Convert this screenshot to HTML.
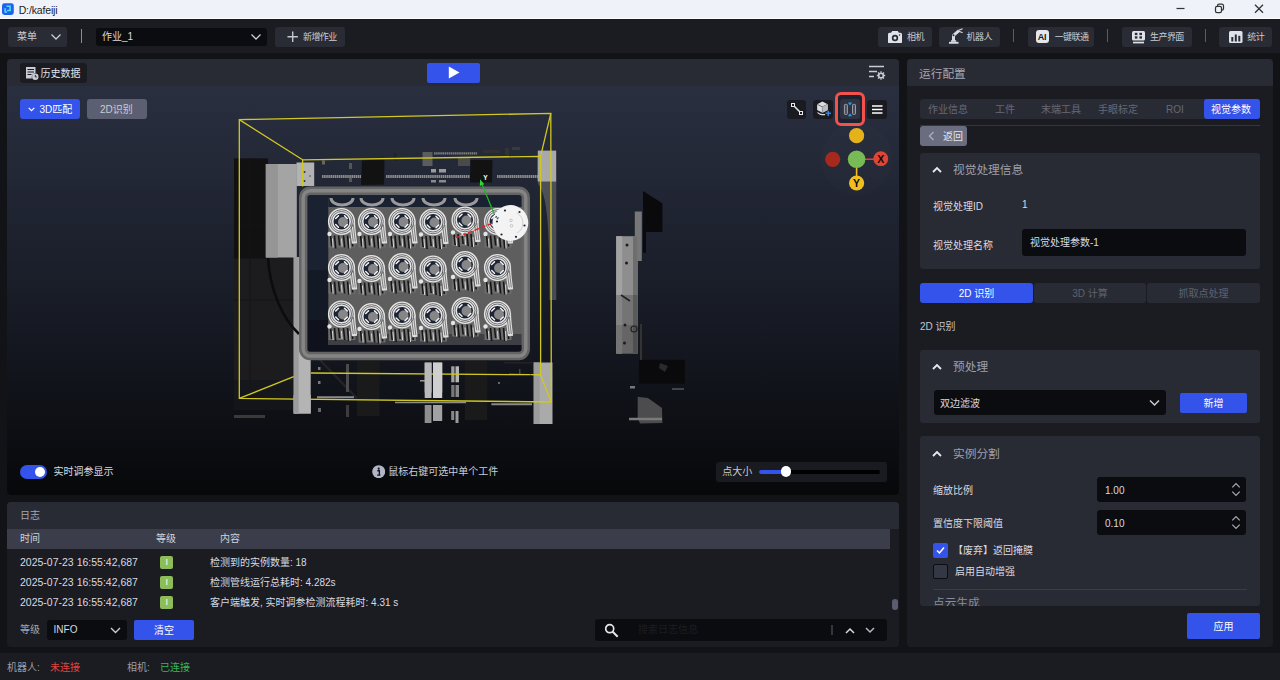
<!DOCTYPE html>
<html lang="zh-CN">
<head>
<meta charset="utf-8">
<title>D:/kafeiji</title>
<style>
*{box-sizing:border-box;margin:0;padding:0}
html,body{width:1280px;height:680px;overflow:hidden;background:#121317}
body{font-family:"Liberation Sans","Noto Sans CJK SC",sans-serif;font-size:11px;color:#d8dae0;position:relative}
.abs,.abs>*{position:absolute}
.t{white-space:nowrap;line-height:1}
#titlebar{left:0;top:0;width:1280px;height:19px;background:#eff3f9}
#toolbar{left:0;top:19px;width:1280px;height:34px;background:#1b1c21}
.btn{background:#2a2c35;border-radius:3px}
.inp{background:#0b0c0f;border-radius:3px}
.blue{background:#3353ea;border-radius:2px}
.sep{width:1px;background:#5a5d69}
#status{left:0;top:653px;width:1280px;height:27px;background:#1b1c21}
.panel{background:#1b1c21;border-radius:4px;overflow:hidden}
.phead{left:0;top:0;width:100%;height:27px;background:#292b34}
.card{background:#292b34;border-radius:3px}
.ctr{padding-bottom:2px;display:flex;align-items:center;justify-content:center;white-space:nowrap}
.c{}
.c2>span{display:inline-block;transform:scaleX(.9)}
.tab{font-size:10px;color:#666976}
.ch{font-size:11.7px;color:#9da0ab}
.lb{font-size:10px;color:#d8dae0}
.ts{font-size:10px;color:#d8dae0}
.bdg{width:13px;height:13px;background:#8dbd58;border-radius:2px;color:#fff;font-size:9px;padding-bottom:0}
.tb{font-size:9px;letter-spacing:-.6px;color:#c9ccd4}
</style>
</head>
<body>
<div class="abs" style="left:0;top:0;width:1280px;height:680px">

<!-- TITLE BAR -->
<div id="titlebar" class="abs">
  <svg style="left:2px;top:3.4px" width="11.8" height="12.2" viewBox="0 0 12 12"><rect width="12" height="12" rx="2.5" fill="#1d63f0"/><path d="M4.6 3.2h3.6v4.2H5.2M3.2 5.2v3.8h2" stroke="#54e0ec" stroke-width="1.5" fill="none"/></svg>
  <div class="t" style="left:18.7px;top:4.5px;font-size:10.5px;letter-spacing:-.15px;color:#1a1a1a">D:/kafeiji</div>
  <svg style="left:1174px;top:2.3px" width="100" height="13" viewBox="0 0 100 13" fill="none" stroke="#333" stroke-width="1.25"><path d="M2.5 6.5h8"/><rect x="41.5" y="4.3" width="6" height="6.3" rx="1.6"/><path d="M43.5 4.3V3.8a1.6 1.6 0 0 1 1.6-1.6h2.8a1.6 1.6 0 0 1 1.6 1.6v2.8a1.6 1.6 0 0 1-1.6 1.6"/><path d="M81 2.8l8 8M89 2.8l-8 8"/></svg>
  <div style="left:0;top:17.6px;width:1280px;height:1.2px;background:#fbfcfe"></div>
</div>

<!-- TOOLBAR -->
<div id="toolbar" class="abs">
  <div class="btn" style="left:8px;top:8px;width:59px;height:19.5px"></div>
  <div class="t" style="left:17px;top:12.5px;font-size:10px;color:#c9ccd4">菜单</div>
  <svg style="left:50px;top:14px" width="12" height="8" viewBox="0 0 12 8" fill="none" stroke="#c9ccd4" stroke-width="1.3"><path d="M1.5 1.5l4.5 4.5l4.5-4.5"/></svg>
  <div class="sep" style="left:80.5px;top:10px;height:13.5px;width:1.3px;background:#8a8d98"></div>
  <div class="inp" style="left:96px;top:9px;width:171px;height:18px"></div>
  <div class="t" style="left:102px;top:13px;font-size:10px;color:#d8dae0">作业_1</div>
  <svg style="left:250px;top:14px" width="12" height="8" viewBox="0 0 12 8" fill="none" stroke="#c9ccd4" stroke-width="1.3"><path d="M1.5 1.5l4.5 4.5l4.5-4.5"/></svg>
  <div class="btn" style="left:275.3px;top:8px;width:69.7px;height:19.6px"></div>
  <svg style="left:286.5px;top:12px" width="11.4" height="11.4" viewBox="0 0 12 12" stroke="#c3c6d0" stroke-width="1.5"><path d="M6 .5v11M.5 6h11"/></svg>
  <div class="t tb" style="left:303px;top:13.5px">新增作业</div>

  <div class="btn" style="left:878.4px;top:8px;width:53.5px;height:19.7px"></div>
  <svg style="left:888.4px;top:11.5px" width="14" height="12.5" viewBox="0 0 14 12.5"><path d="M4.2 0h5.6l1.1 1.8h1.6a1.5 1.5 0 0 1 1.5 1.5v7.7a1.5 1.5 0 0 1-1.5 1.5H1.5A1.5 1.5 0 0 1 0 11V3.3a1.5 1.5 0 0 1 1.5-1.5h1.6Z" fill="#e0e2ea"/><circle cx="7" cy="7" r="3.2" fill="#2a2c35"/><circle cx="7" cy="7" r="1.5" fill="#e0e2ea"/><circle cx="11.6" cy="4" r=".8" fill="#2a2c35"/></svg>
  <div class="t tb" style="left:907px;top:13.5px">相机</div>
  <div class="btn" style="left:938.8px;top:8px;width:61.2px;height:19.7px"></div>
  <svg style="left:947.5px;top:8.5px" width="16" height="16" viewBox="0 0 16 16" fill="none" stroke="#d8dae2"><path d="M5.5 13V7.300L11 2.700" stroke-width="3" stroke-linejoin="round"/><path d="M10.800 2.300l3.800-1.600M11 3.200l3.600 1.600" stroke-width="1.200"/><circle cx="5.5" cy="7.200" r="1" fill="#2a2c35" stroke="none"/><path d="M1 14.800h9.5" stroke-width="1.900"/><path d="M3 13h5.200" stroke-width="1.600"/></svg>
  <div class="t tb" style="left:966.6px;top:13.5px">机器人</div>
  <div class="sep" style="left:1012.8px;top:10.4px;height:13px;width:1.3px"></div>
  <div class="btn" style="left:1027.5px;top:8px;width:66.5px;height:19.7px"></div>
  <div style="left:1036px;top:11.3px;width:13px;height:13px;background:#e6e7ec;border-radius:3px"></div>
  <div class="t" style="left:1037.7px;top:13.5px;font-size:9px;font-weight:bold;color:#1b1c21;letter-spacing:-.3px">AI</div>
  <div class="t tb" style="left:1054.7px;top:13.5px">一键联通</div>
  <div class="sep" style="left:1107.2px;top:10.4px;height:13px;width:1.3px"></div>
  <div class="btn" style="left:1121.9px;top:8px;width:69.8px;height:19.7px"></div>
  <svg style="left:1132.3px;top:11.5px" width="13" height="13" viewBox="0 0 13 13"><rect x="0" y="0" width="13" height="9.5" rx="1.5" fill="#e0e2ea"/><rect x="2.8" y="1.8" width="2.6" height="2.3" fill="#2a2c35"/><rect x="7.4" y="1.8" width="2.6" height="2.3" fill="#2a2c35"/><rect x="2.8" y="5.3" width="2.6" height="2.3" fill="#2a2c35"/><rect x="7.4" y="5.3" width="2.6" height="2.3" fill="#2a2c35"/><rect x="1" y="10.7" width="11" height="1.7" fill="#e0e2ea"/></svg>
  <div class="t tb" style="left:1150.1px;top:13.5px">生产界面</div>
  <div class="sep" style="left:1204.9px;top:10.4px;height:13px;width:1.3px"></div>
  <div class="btn" style="left:1219.4px;top:8px;width:53px;height:19.7px"></div>
  <svg style="left:1229.1px;top:11.6px" width="13.5" height="12" viewBox="0 0 13.5 12"><rect width="13.5" height="12" rx="1.5" fill="#e0e2ea"/><rect x="2.3" y="6" width="2" height="4.5" fill="#2a2c35"/><rect x="5.8" y="3.5" width="2" height="7" fill="#2a2c35"/><rect x="9.3" y="4.8" width="2" height="5.7" fill="#2a2c35"/></svg>
  <div class="t tb" style="left:1247.3px;top:13.5px">统计</div>
</div>

<!-- VIEW PANEL -->
<div id="view" class="abs panel" style="left:7px;top:59px;width:892px;height:435.5px">
  <div class="phead"></div>
  <div id="vp" style="left:0;top:27px;width:892px;height:408.5px;background:linear-gradient(#2a2f40 0%,#191d28 50%,#07080a 100%)"></div>
  <svg id="scene" style="left:-7px;top:-59px" width="1280" height="680" viewBox="0 0 1280 680">
<g shape-rendering="auto">
<!-- left dark block -->
<path d="M234 158.5L268 158.5L268 257L294 257L294 400L234 400Z" fill="#1c1c1e"/><rect x="234" y="158.5" width="34" height="100" fill="#111112"/>
<path d="M234 300h60M234 225h34M250 158v242" stroke="#141415" stroke-width="1" fill="none"/>
<rect x="234" y="380" width="60" height="30" fill="#15161a" opacity=".8"/>
<!-- grey panel -->
<rect x="265.8" y="164" width="31" height="93.5" fill="#a4a4a4"/>
<rect x="265.8" y="164" width="12" height="93.5" fill="#959595"/>
<rect x="296.5" y="162.5" width="17.7" height="23.5" fill="#b2b2b2"/>
<circle cx="304.5" cy="172" r="1" fill="#333"/><circle cx="304.5" cy="181" r="1" fill="#333"/><circle cx="310" cy="176" r=".8" fill="#444"/>
<!-- left post -->
<rect x="293.7" y="257" width="17" height="156.5" fill="#b4b4b4"/>
<rect x="293.7" y="257" width="5" height="156.5" fill="#9c9c9c"/>
<!-- cable -->
<path d="M268 258C270 290 282 318 299 334" fill="none" stroke="#0c0c0e" stroke-width="2.6"/>
<path d="M320 360L373 415" fill="none" stroke="#242426" stroke-width="2.4"/>
<!-- top rods and bits -->
<path d="M322 176.5H361M386 176.5H470M497 176.5H538" stroke="#8a8a8a" stroke-width="3" stroke-dasharray="1.6 .5"/>
<path d="M434 153.4H477" stroke="#7c7c7c" stroke-width="2.4" stroke-dasharray="1.6 .5"/>
<path d="M483 151.5H500" stroke="#303033" stroke-width="3"/>
<rect x="422.5" y="152" width="10" height="14" fill="#5c5c5c"/>
<rect x="458" y="158" width="12" height="8" fill="#4a4a4a"/>
<rect x="431" y="169" width="5" height="3.5" fill="#9a9a9a"/><rect x="439" y="169" width="7" height="3.5" fill="#9a9a9a"/>
<rect x="431" y="180" width="5" height="2.5" fill="#8a8a8a"/><rect x="439" y="180" width="7" height="2.5" fill="#8a8a8a"/>
<rect x="322" y="160.5" width="3" height="4" fill="#666"/><rect x="349" y="163" width="3" height="6" fill="#555"/><rect x="349" y="178" width="3" height="4" fill="#555"/>
<rect x="394" y="153" width="2.5" height="8" fill="#222"/><rect x="505" y="148" width="4" height="7" fill="#333"/><rect x="512" y="147" width="8" height="3" fill="#3a3a3a"/>
<!-- black blocks top -->
<path d="M362 160.5L384.5 159.5L384 184.5L361 185Z" fill="#121213"/>
<path d="M470.5 160L492.5 160L492 182.5L470 182.5Z" fill="#121213"/>
<!-- right post -->
<rect x="537.8" y="150.6" width="18.4" height="31" fill="#a9a9a9"/>
<path d="M538 181L556.3 181L556.3 300L549.5 300C549.5 230 548 196 538 184Z" fill="#8a8a8a" opacity=".42"/>
<!-- tray inside -->
<rect x="303" y="190.5" width="223" height="165.5" rx="7" fill="#1a2131"/>
<rect x="303" y="270" width="223" height="86" rx="7" fill="#000" opacity=".22"/><rect x="303" y="320" width="223" height="36" rx="7" fill="#000" opacity=".25"/>
<rect x="328.3" y="198" width="195" height="147" fill="#5e5e5e"/>
<rect x="328.3" y="196" width="195" height="11" fill="#1a2131"/>
<path d="M331 198a11 7 0 0 0 22 0M361 198a11 7 0 0 0 22 0M392 198a11 7 0 0 0 22 0M423 198a11 7 0 0 0 22 0M455 198a11 7 0 0 0 22 0" fill="none" stroke="#9a9a9a" stroke-width="3"/>
<rect x="328.3" y="334" width="195" height="11" fill="#3e3f44"/>
<rect x="328.5" y="230.5" width="27" height="17" fill="#6c6c6c"/>
<path d="M330.5 235.5l1.2 11" stroke="#161616" stroke-width="1.6"/>
<path d="M334.5 235.5l1.2 13" stroke="#161616" stroke-width="1.6"/>
<path d="M338.5 235.5l1.2 10" stroke="#161616" stroke-width="1.6"/>
<path d="M343.5 235.5l1.2 12" stroke="#161616" stroke-width="1.6"/>
<path d="M347.5 235.5l1.2 13" stroke="#161616" stroke-width="1.6"/>
<path d="M351.5 235.5l1.2 11" stroke="#161616" stroke-width="1.6"/>
<path d="M332.5 238.5l0.6 9" stroke="#d8d8d8" stroke-width="1"/>
<path d="M341.5 238.5l0.6 8" stroke="#d8d8d8" stroke-width="1"/>
<path d="M349.5 238.5l0.6 10" stroke="#d8d8d8" stroke-width="1"/>
<circle cx="341.5" cy="221.5" r="10.8" fill="#1c2334" stroke="#e6e6e6" stroke-width="5.6"/>
<path d="M352.3 220.5C352.5 229.5 353.5 235.5 354.5 243.5" fill="none" stroke="#dedede" stroke-width="5.4"/>
<circle cx="341.5" cy="221.5" r="10" fill="none" stroke="#3c3c3c" stroke-width=".7"/>
<circle cx="341.5" cy="221.5" r="11.8" fill="none" stroke="#3c3c3c" stroke-width=".7"/>
<path d="M351.0 224.5l2.3 17M353.3 224.5l2 17" fill="none" stroke="#3a3a3a" stroke-width=".6"/>
<circle cx="343.0" cy="222.0" r="5" fill="#868686"/>
<path d="M347.3 224.5L344.5 227.3" stroke="#f4f4f4" stroke-width="1.5" stroke-linecap="round"/>
<path d="M338.5 227.3L335.7 224.5" stroke="#f4f4f4" stroke-width="1.5" stroke-linecap="round"/>
<path d="M335.7 218.5L338.5 215.7" stroke="#f4f4f4" stroke-width="1.5" stroke-linecap="round"/>
<path d="M344.5 215.7L347.3 218.5" stroke="#f4f4f4" stroke-width="1.5" stroke-linecap="round"/>
<circle cx="329.5" cy="234.0" r="2.2" fill="#e4e4e4"/>
<rect x="358.5" y="230.5" width="27" height="17" fill="#6c6c6c"/>
<path d="M360.5 235.5l1.2 11" stroke="#161616" stroke-width="1.6"/>
<path d="M364.5 235.5l1.2 13" stroke="#161616" stroke-width="1.6"/>
<path d="M368.5 235.5l1.2 10" stroke="#161616" stroke-width="1.6"/>
<path d="M373.5 235.5l1.2 12" stroke="#161616" stroke-width="1.6"/>
<path d="M377.5 235.5l1.2 13" stroke="#161616" stroke-width="1.6"/>
<path d="M381.5 235.5l1.2 11" stroke="#161616" stroke-width="1.6"/>
<path d="M362.5 238.5l0.6 9" stroke="#d8d8d8" stroke-width="1"/>
<path d="M371.5 238.5l0.6 8" stroke="#d8d8d8" stroke-width="1"/>
<path d="M379.5 238.5l0.6 10" stroke="#d8d8d8" stroke-width="1"/>
<circle cx="371.5" cy="221.5" r="10.8" fill="#1c2334" stroke="#e6e6e6" stroke-width="5.6"/>
<path d="M382.3 220.5C382.5 229.5 383.5 235.5 384.5 243.5" fill="none" stroke="#dedede" stroke-width="5.4"/>
<circle cx="371.5" cy="221.5" r="10" fill="none" stroke="#3c3c3c" stroke-width=".7"/>
<circle cx="371.5" cy="221.5" r="11.8" fill="none" stroke="#3c3c3c" stroke-width=".7"/>
<path d="M381.0 224.5l2.3 17M383.3 224.5l2 17" fill="none" stroke="#3a3a3a" stroke-width=".6"/>
<circle cx="373.0" cy="222.0" r="5" fill="#868686"/>
<path d="M377.3 224.5L374.5 227.3" stroke="#f4f4f4" stroke-width="1.5" stroke-linecap="round"/>
<path d="M368.5 227.3L365.7 224.5" stroke="#f4f4f4" stroke-width="1.5" stroke-linecap="round"/>
<path d="M365.7 218.5L368.5 215.7" stroke="#f4f4f4" stroke-width="1.5" stroke-linecap="round"/>
<path d="M374.5 215.7L377.3 218.5" stroke="#f4f4f4" stroke-width="1.5" stroke-linecap="round"/>
<circle cx="359.5" cy="234.0" r="2.2" fill="#e4e4e4"/>
<rect x="389.0" y="230.5" width="27" height="17" fill="#6c6c6c"/>
<path d="M391.0 235.5l1.2 11" stroke="#161616" stroke-width="1.6"/>
<path d="M395.0 235.5l1.2 13" stroke="#161616" stroke-width="1.6"/>
<path d="M399.0 235.5l1.2 10" stroke="#161616" stroke-width="1.6"/>
<path d="M404.0 235.5l1.2 12" stroke="#161616" stroke-width="1.6"/>
<path d="M408.0 235.5l1.2 13" stroke="#161616" stroke-width="1.6"/>
<path d="M412.0 235.5l1.2 11" stroke="#161616" stroke-width="1.6"/>
<path d="M393.0 238.5l0.6 9" stroke="#d8d8d8" stroke-width="1"/>
<path d="M402.0 238.5l0.6 8" stroke="#d8d8d8" stroke-width="1"/>
<path d="M410.0 238.5l0.6 10" stroke="#d8d8d8" stroke-width="1"/>
<circle cx="402.0" cy="221.5" r="10.8" fill="#1c2334" stroke="#e6e6e6" stroke-width="5.6"/>
<path d="M412.8 220.5C413.0 229.5 414.0 235.5 415.0 243.5" fill="none" stroke="#dedede" stroke-width="5.4"/>
<circle cx="402.0" cy="221.5" r="10" fill="none" stroke="#3c3c3c" stroke-width=".7"/>
<circle cx="402.0" cy="221.5" r="11.8" fill="none" stroke="#3c3c3c" stroke-width=".7"/>
<path d="M411.5 224.5l2.3 17M413.8 224.5l2 17" fill="none" stroke="#3a3a3a" stroke-width=".6"/>
<circle cx="403.5" cy="222.0" r="5" fill="#868686"/>
<path d="M407.8 224.5L405.0 227.3" stroke="#f4f4f4" stroke-width="1.5" stroke-linecap="round"/>
<path d="M399.0 227.3L396.2 224.5" stroke="#f4f4f4" stroke-width="1.5" stroke-linecap="round"/>
<path d="M396.2 218.5L399.0 215.7" stroke="#f4f4f4" stroke-width="1.5" stroke-linecap="round"/>
<path d="M405.0 215.7L407.8 218.5" stroke="#f4f4f4" stroke-width="1.5" stroke-linecap="round"/>
<circle cx="390.0" cy="234.0" r="2.2" fill="#e4e4e4"/>
<rect x="420.0" y="231.0" width="27" height="17" fill="#6c6c6c"/>
<path d="M422.0 236.0l1.2 11" stroke="#161616" stroke-width="1.6"/>
<path d="M426.0 236.0l1.2 13" stroke="#161616" stroke-width="1.6"/>
<path d="M430.0 236.0l1.2 10" stroke="#161616" stroke-width="1.6"/>
<path d="M435.0 236.0l1.2 12" stroke="#161616" stroke-width="1.6"/>
<path d="M439.0 236.0l1.2 13" stroke="#161616" stroke-width="1.6"/>
<path d="M443.0 236.0l1.2 11" stroke="#161616" stroke-width="1.6"/>
<path d="M424.0 239.0l0.6 9" stroke="#d8d8d8" stroke-width="1"/>
<path d="M433.0 239.0l0.6 8" stroke="#d8d8d8" stroke-width="1"/>
<path d="M441.0 239.0l0.6 10" stroke="#d8d8d8" stroke-width="1"/>
<circle cx="433.0" cy="222.0" r="10.8" fill="#1c2334" stroke="#e6e6e6" stroke-width="5.6"/>
<path d="M443.8 221.0C444.0 230.0 445.0 236.0 446.0 244.0" fill="none" stroke="#dedede" stroke-width="5.4"/>
<circle cx="433.0" cy="222.0" r="10" fill="none" stroke="#3c3c3c" stroke-width=".7"/>
<circle cx="433.0" cy="222.0" r="11.8" fill="none" stroke="#3c3c3c" stroke-width=".7"/>
<path d="M442.5 225.0l2.3 17M444.8 225.0l2 17" fill="none" stroke="#3a3a3a" stroke-width=".6"/>
<circle cx="434.5" cy="222.5" r="5" fill="#868686"/>
<path d="M438.8 225.0L436.0 227.8" stroke="#f4f4f4" stroke-width="1.5" stroke-linecap="round"/>
<path d="M430.0 227.8L427.2 225.0" stroke="#f4f4f4" stroke-width="1.5" stroke-linecap="round"/>
<path d="M427.2 219.0L430.0 216.2" stroke="#f4f4f4" stroke-width="1.5" stroke-linecap="round"/>
<path d="M436.0 216.2L438.8 219.0" stroke="#f4f4f4" stroke-width="1.5" stroke-linecap="round"/>
<circle cx="421.0" cy="234.5" r="2.2" fill="#e4e4e4"/>
<rect x="452.0" y="229.0" width="27" height="17" fill="#6c6c6c"/>
<path d="M454.0 234.0l1.2 11" stroke="#161616" stroke-width="1.6"/>
<path d="M458.0 234.0l1.2 13" stroke="#161616" stroke-width="1.6"/>
<path d="M462.0 234.0l1.2 10" stroke="#161616" stroke-width="1.6"/>
<path d="M467.0 234.0l1.2 12" stroke="#161616" stroke-width="1.6"/>
<path d="M471.0 234.0l1.2 13" stroke="#161616" stroke-width="1.6"/>
<path d="M475.0 234.0l1.2 11" stroke="#161616" stroke-width="1.6"/>
<path d="M456.0 237.0l0.6 9" stroke="#d8d8d8" stroke-width="1"/>
<path d="M465.0 237.0l0.6 8" stroke="#d8d8d8" stroke-width="1"/>
<path d="M473.0 237.0l0.6 10" stroke="#d8d8d8" stroke-width="1"/>
<circle cx="465.0" cy="220.0" r="10.8" fill="#1c2334" stroke="#e6e6e6" stroke-width="5.6"/>
<path d="M475.8 219.0C476.0 228.0 477.0 234.0 478.0 242.0" fill="none" stroke="#dedede" stroke-width="5.4"/>
<circle cx="465.0" cy="220.0" r="10" fill="none" stroke="#3c3c3c" stroke-width=".7"/>
<circle cx="465.0" cy="220.0" r="11.8" fill="none" stroke="#3c3c3c" stroke-width=".7"/>
<path d="M474.5 223.0l2.3 17M476.8 223.0l2 17" fill="none" stroke="#3a3a3a" stroke-width=".6"/>
<circle cx="466.5" cy="220.5" r="5" fill="#868686"/>
<path d="M470.8 223.0L468.0 225.8" stroke="#f4f4f4" stroke-width="1.5" stroke-linecap="round"/>
<path d="M462.0 225.8L459.2 223.0" stroke="#f4f4f4" stroke-width="1.5" stroke-linecap="round"/>
<path d="M459.2 217.0L462.0 214.2" stroke="#f4f4f4" stroke-width="1.5" stroke-linecap="round"/>
<path d="M468.0 214.2L470.8 217.0" stroke="#f4f4f4" stroke-width="1.5" stroke-linecap="round"/>
<circle cx="453.0" cy="232.5" r="2.2" fill="#e4e4e4"/>
<rect x="484.5" y="230.5" width="27" height="17" fill="#6c6c6c"/>
<path d="M486.5 235.5l1.2 11" stroke="#161616" stroke-width="1.6"/>
<path d="M490.5 235.5l1.2 13" stroke="#161616" stroke-width="1.6"/>
<path d="M494.5 235.5l1.2 10" stroke="#161616" stroke-width="1.6"/>
<path d="M499.5 235.5l1.2 12" stroke="#161616" stroke-width="1.6"/>
<path d="M503.5 235.5l1.2 13" stroke="#161616" stroke-width="1.6"/>
<path d="M507.5 235.5l1.2 11" stroke="#161616" stroke-width="1.6"/>
<path d="M488.5 238.5l0.6 9" stroke="#d8d8d8" stroke-width="1"/>
<path d="M497.5 238.5l0.6 8" stroke="#d8d8d8" stroke-width="1"/>
<path d="M505.5 238.5l0.6 10" stroke="#d8d8d8" stroke-width="1"/>
<circle cx="497.5" cy="221.5" r="10.8" fill="#1c2334" stroke="#e6e6e6" stroke-width="5.6"/>
<path d="M508.3 220.5C508.5 229.5 509.5 235.5 510.5 243.5" fill="none" stroke="#dedede" stroke-width="5.4"/>
<circle cx="497.5" cy="221.5" r="10" fill="none" stroke="#3c3c3c" stroke-width=".7"/>
<circle cx="497.5" cy="221.5" r="11.8" fill="none" stroke="#3c3c3c" stroke-width=".7"/>
<path d="M507.0 224.5l2.3 17M509.3 224.5l2 17" fill="none" stroke="#3a3a3a" stroke-width=".6"/>
<circle cx="499.0" cy="222.0" r="5" fill="#868686"/>
<path d="M503.3 224.5L500.5 227.3" stroke="#f4f4f4" stroke-width="1.5" stroke-linecap="round"/>
<path d="M494.5 227.3L491.7 224.5" stroke="#f4f4f4" stroke-width="1.5" stroke-linecap="round"/>
<path d="M491.7 218.5L494.5 215.7" stroke="#f4f4f4" stroke-width="1.5" stroke-linecap="round"/>
<path d="M500.5 215.7L503.3 218.5" stroke="#f4f4f4" stroke-width="1.5" stroke-linecap="round"/>
<circle cx="485.5" cy="234.0" r="2.2" fill="#e4e4e4"/>
<rect x="328.5" y="276.5" width="27" height="17" fill="#6c6c6c"/>
<path d="M330.5 281.5l1.2 11" stroke="#161616" stroke-width="1.6"/>
<path d="M334.5 281.5l1.2 13" stroke="#161616" stroke-width="1.6"/>
<path d="M338.5 281.5l1.2 10" stroke="#161616" stroke-width="1.6"/>
<path d="M343.5 281.5l1.2 12" stroke="#161616" stroke-width="1.6"/>
<path d="M347.5 281.5l1.2 13" stroke="#161616" stroke-width="1.6"/>
<path d="M351.5 281.5l1.2 11" stroke="#161616" stroke-width="1.6"/>
<path d="M332.5 284.5l0.6 9" stroke="#d8d8d8" stroke-width="1"/>
<path d="M341.5 284.5l0.6 8" stroke="#d8d8d8" stroke-width="1"/>
<path d="M349.5 284.5l0.6 10" stroke="#d8d8d8" stroke-width="1"/>
<circle cx="341.5" cy="267.5" r="10.8" fill="#1c2334" stroke="#e6e6e6" stroke-width="5.6"/>
<path d="M352.3 266.5C352.5 275.5 353.5 281.5 354.5 289.5" fill="none" stroke="#dedede" stroke-width="5.4"/>
<circle cx="341.5" cy="267.5" r="10" fill="none" stroke="#3c3c3c" stroke-width=".7"/>
<circle cx="341.5" cy="267.5" r="11.8" fill="none" stroke="#3c3c3c" stroke-width=".7"/>
<path d="M351.0 270.5l2.3 17M353.3 270.5l2 17" fill="none" stroke="#3a3a3a" stroke-width=".6"/>
<circle cx="343.0" cy="268.0" r="5" fill="#868686"/>
<path d="M347.3 270.5L344.5 273.3" stroke="#f4f4f4" stroke-width="1.5" stroke-linecap="round"/>
<path d="M338.5 273.3L335.7 270.5" stroke="#f4f4f4" stroke-width="1.5" stroke-linecap="round"/>
<path d="M335.7 264.5L338.5 261.7" stroke="#f4f4f4" stroke-width="1.5" stroke-linecap="round"/>
<path d="M344.5 261.7L347.3 264.5" stroke="#f4f4f4" stroke-width="1.5" stroke-linecap="round"/>
<circle cx="329.5" cy="280.0" r="2.2" fill="#e4e4e4"/>
<rect x="358.5" y="277.5" width="27" height="17" fill="#6c6c6c"/>
<path d="M360.5 282.5l1.2 11" stroke="#161616" stroke-width="1.6"/>
<path d="M364.5 282.5l1.2 13" stroke="#161616" stroke-width="1.6"/>
<path d="M368.5 282.5l1.2 10" stroke="#161616" stroke-width="1.6"/>
<path d="M373.5 282.5l1.2 12" stroke="#161616" stroke-width="1.6"/>
<path d="M377.5 282.5l1.2 13" stroke="#161616" stroke-width="1.6"/>
<path d="M381.5 282.5l1.2 11" stroke="#161616" stroke-width="1.6"/>
<path d="M362.5 285.5l0.6 9" stroke="#d8d8d8" stroke-width="1"/>
<path d="M371.5 285.5l0.6 8" stroke="#d8d8d8" stroke-width="1"/>
<path d="M379.5 285.5l0.6 10" stroke="#d8d8d8" stroke-width="1"/>
<circle cx="371.5" cy="268.5" r="10.8" fill="#1c2334" stroke="#e6e6e6" stroke-width="5.6"/>
<path d="M382.3 267.5C382.5 276.5 383.5 282.5 384.5 290.5" fill="none" stroke="#dedede" stroke-width="5.4"/>
<circle cx="371.5" cy="268.5" r="10" fill="none" stroke="#3c3c3c" stroke-width=".7"/>
<circle cx="371.5" cy="268.5" r="11.8" fill="none" stroke="#3c3c3c" stroke-width=".7"/>
<path d="M381.0 271.5l2.3 17M383.3 271.5l2 17" fill="none" stroke="#3a3a3a" stroke-width=".6"/>
<circle cx="373.0" cy="269.0" r="5" fill="#868686"/>
<path d="M377.3 271.5L374.5 274.3" stroke="#f4f4f4" stroke-width="1.5" stroke-linecap="round"/>
<path d="M368.5 274.3L365.7 271.5" stroke="#f4f4f4" stroke-width="1.5" stroke-linecap="round"/>
<path d="M365.7 265.5L368.5 262.7" stroke="#f4f4f4" stroke-width="1.5" stroke-linecap="round"/>
<path d="M374.5 262.7L377.3 265.5" stroke="#f4f4f4" stroke-width="1.5" stroke-linecap="round"/>
<circle cx="359.5" cy="281.0" r="2.2" fill="#e4e4e4"/>
<rect x="389.0" y="275.5" width="27" height="17" fill="#6c6c6c"/>
<path d="M391.0 280.5l1.2 11" stroke="#161616" stroke-width="1.6"/>
<path d="M395.0 280.5l1.2 13" stroke="#161616" stroke-width="1.6"/>
<path d="M399.0 280.5l1.2 10" stroke="#161616" stroke-width="1.6"/>
<path d="M404.0 280.5l1.2 12" stroke="#161616" stroke-width="1.6"/>
<path d="M408.0 280.5l1.2 13" stroke="#161616" stroke-width="1.6"/>
<path d="M412.0 280.5l1.2 11" stroke="#161616" stroke-width="1.6"/>
<path d="M393.0 283.5l0.6 9" stroke="#d8d8d8" stroke-width="1"/>
<path d="M402.0 283.5l0.6 8" stroke="#d8d8d8" stroke-width="1"/>
<path d="M410.0 283.5l0.6 10" stroke="#d8d8d8" stroke-width="1"/>
<circle cx="402.0" cy="266.5" r="10.8" fill="#1c2334" stroke="#e6e6e6" stroke-width="5.6"/>
<path d="M412.8 265.5C413.0 274.5 414.0 280.5 415.0 288.5" fill="none" stroke="#dedede" stroke-width="5.4"/>
<circle cx="402.0" cy="266.5" r="10" fill="none" stroke="#3c3c3c" stroke-width=".7"/>
<circle cx="402.0" cy="266.5" r="11.8" fill="none" stroke="#3c3c3c" stroke-width=".7"/>
<path d="M411.5 269.5l2.3 17M413.8 269.5l2 17" fill="none" stroke="#3a3a3a" stroke-width=".6"/>
<circle cx="403.5" cy="267.0" r="5" fill="#868686"/>
<path d="M407.8 269.5L405.0 272.3" stroke="#f4f4f4" stroke-width="1.5" stroke-linecap="round"/>
<path d="M399.0 272.3L396.2 269.5" stroke="#f4f4f4" stroke-width="1.5" stroke-linecap="round"/>
<path d="M396.2 263.5L399.0 260.7" stroke="#f4f4f4" stroke-width="1.5" stroke-linecap="round"/>
<path d="M405.0 260.7L407.8 263.5" stroke="#f4f4f4" stroke-width="1.5" stroke-linecap="round"/>
<circle cx="390.0" cy="279.0" r="2.2" fill="#e4e4e4"/>
<rect x="420.0" y="278.0" width="27" height="17" fill="#6c6c6c"/>
<path d="M422.0 283.0l1.2 11" stroke="#161616" stroke-width="1.6"/>
<path d="M426.0 283.0l1.2 13" stroke="#161616" stroke-width="1.6"/>
<path d="M430.0 283.0l1.2 10" stroke="#161616" stroke-width="1.6"/>
<path d="M435.0 283.0l1.2 12" stroke="#161616" stroke-width="1.6"/>
<path d="M439.0 283.0l1.2 13" stroke="#161616" stroke-width="1.6"/>
<path d="M443.0 283.0l1.2 11" stroke="#161616" stroke-width="1.6"/>
<path d="M424.0 286.0l0.6 9" stroke="#d8d8d8" stroke-width="1"/>
<path d="M433.0 286.0l0.6 8" stroke="#d8d8d8" stroke-width="1"/>
<path d="M441.0 286.0l0.6 10" stroke="#d8d8d8" stroke-width="1"/>
<circle cx="433.0" cy="269.0" r="10.8" fill="#1c2334" stroke="#e6e6e6" stroke-width="5.6"/>
<path d="M443.8 268.0C444.0 277.0 445.0 283.0 446.0 291.0" fill="none" stroke="#dedede" stroke-width="5.4"/>
<circle cx="433.0" cy="269.0" r="10" fill="none" stroke="#3c3c3c" stroke-width=".7"/>
<circle cx="433.0" cy="269.0" r="11.8" fill="none" stroke="#3c3c3c" stroke-width=".7"/>
<path d="M442.5 272.0l2.3 17M444.8 272.0l2 17" fill="none" stroke="#3a3a3a" stroke-width=".6"/>
<circle cx="434.5" cy="269.5" r="5" fill="#868686"/>
<path d="M438.8 272.0L436.0 274.8" stroke="#f4f4f4" stroke-width="1.5" stroke-linecap="round"/>
<path d="M430.0 274.8L427.2 272.0" stroke="#f4f4f4" stroke-width="1.5" stroke-linecap="round"/>
<path d="M427.2 266.0L430.0 263.2" stroke="#f4f4f4" stroke-width="1.5" stroke-linecap="round"/>
<path d="M436.0 263.2L438.8 266.0" stroke="#f4f4f4" stroke-width="1.5" stroke-linecap="round"/>
<circle cx="421.0" cy="281.5" r="2.2" fill="#e4e4e4"/>
<rect x="452.0" y="273.5" width="27" height="17" fill="#6c6c6c"/>
<path d="M454.0 278.5l1.2 11" stroke="#161616" stroke-width="1.6"/>
<path d="M458.0 278.5l1.2 13" stroke="#161616" stroke-width="1.6"/>
<path d="M462.0 278.5l1.2 10" stroke="#161616" stroke-width="1.6"/>
<path d="M467.0 278.5l1.2 12" stroke="#161616" stroke-width="1.6"/>
<path d="M471.0 278.5l1.2 13" stroke="#161616" stroke-width="1.6"/>
<path d="M475.0 278.5l1.2 11" stroke="#161616" stroke-width="1.6"/>
<path d="M456.0 281.5l0.6 9" stroke="#d8d8d8" stroke-width="1"/>
<path d="M465.0 281.5l0.6 8" stroke="#d8d8d8" stroke-width="1"/>
<path d="M473.0 281.5l0.6 10" stroke="#d8d8d8" stroke-width="1"/>
<circle cx="465.0" cy="264.5" r="10.8" fill="#1c2334" stroke="#e6e6e6" stroke-width="5.6"/>
<path d="M475.8 263.5C476.0 272.5 477.0 278.5 478.0 286.5" fill="none" stroke="#dedede" stroke-width="5.4"/>
<circle cx="465.0" cy="264.5" r="10" fill="none" stroke="#3c3c3c" stroke-width=".7"/>
<circle cx="465.0" cy="264.5" r="11.8" fill="none" stroke="#3c3c3c" stroke-width=".7"/>
<path d="M474.5 267.5l2.3 17M476.8 267.5l2 17" fill="none" stroke="#3a3a3a" stroke-width=".6"/>
<circle cx="466.5" cy="265.0" r="5" fill="#868686"/>
<path d="M470.8 267.5L468.0 270.3" stroke="#f4f4f4" stroke-width="1.5" stroke-linecap="round"/>
<path d="M462.0 270.3L459.2 267.5" stroke="#f4f4f4" stroke-width="1.5" stroke-linecap="round"/>
<path d="M459.2 261.5L462.0 258.7" stroke="#f4f4f4" stroke-width="1.5" stroke-linecap="round"/>
<path d="M468.0 258.7L470.8 261.5" stroke="#f4f4f4" stroke-width="1.5" stroke-linecap="round"/>
<circle cx="453.0" cy="277.0" r="2.2" fill="#e4e4e4"/>
<rect x="484.5" y="276.5" width="27" height="17" fill="#6c6c6c"/>
<path d="M486.5 281.5l1.2 11" stroke="#161616" stroke-width="1.6"/>
<path d="M490.5 281.5l1.2 13" stroke="#161616" stroke-width="1.6"/>
<path d="M494.5 281.5l1.2 10" stroke="#161616" stroke-width="1.6"/>
<path d="M499.5 281.5l1.2 12" stroke="#161616" stroke-width="1.6"/>
<path d="M503.5 281.5l1.2 13" stroke="#161616" stroke-width="1.6"/>
<path d="M507.5 281.5l1.2 11" stroke="#161616" stroke-width="1.6"/>
<path d="M488.5 284.5l0.6 9" stroke="#d8d8d8" stroke-width="1"/>
<path d="M497.5 284.5l0.6 8" stroke="#d8d8d8" stroke-width="1"/>
<path d="M505.5 284.5l0.6 10" stroke="#d8d8d8" stroke-width="1"/>
<circle cx="497.5" cy="267.5" r="10.8" fill="#1c2334" stroke="#e6e6e6" stroke-width="5.6"/>
<path d="M508.3 266.5C508.5 275.5 509.5 281.5 510.5 289.5" fill="none" stroke="#dedede" stroke-width="5.4"/>
<circle cx="497.5" cy="267.5" r="10" fill="none" stroke="#3c3c3c" stroke-width=".7"/>
<circle cx="497.5" cy="267.5" r="11.8" fill="none" stroke="#3c3c3c" stroke-width=".7"/>
<path d="M507.0 270.5l2.3 17M509.3 270.5l2 17" fill="none" stroke="#3a3a3a" stroke-width=".6"/>
<circle cx="499.0" cy="268.0" r="5" fill="#868686"/>
<path d="M503.3 270.5L500.5 273.3" stroke="#f4f4f4" stroke-width="1.5" stroke-linecap="round"/>
<path d="M494.5 273.3L491.7 270.5" stroke="#f4f4f4" stroke-width="1.5" stroke-linecap="round"/>
<path d="M491.7 264.5L494.5 261.7" stroke="#f4f4f4" stroke-width="1.5" stroke-linecap="round"/>
<path d="M500.5 261.7L503.3 264.5" stroke="#f4f4f4" stroke-width="1.5" stroke-linecap="round"/>
<circle cx="485.5" cy="280.0" r="2.2" fill="#e4e4e4"/>
<rect x="328.5" y="323.0" width="27" height="17" fill="#6c6c6c"/>
<path d="M330.5 328.0l1.2 11" stroke="#161616" stroke-width="1.6"/>
<path d="M334.5 328.0l1.2 13" stroke="#161616" stroke-width="1.6"/>
<path d="M338.5 328.0l1.2 10" stroke="#161616" stroke-width="1.6"/>
<path d="M343.5 328.0l1.2 12" stroke="#161616" stroke-width="1.6"/>
<path d="M347.5 328.0l1.2 13" stroke="#161616" stroke-width="1.6"/>
<path d="M351.5 328.0l1.2 11" stroke="#161616" stroke-width="1.6"/>
<path d="M332.5 331.0l0.6 9" stroke="#d8d8d8" stroke-width="1"/>
<path d="M341.5 331.0l0.6 8" stroke="#d8d8d8" stroke-width="1"/>
<path d="M349.5 331.0l0.6 10" stroke="#d8d8d8" stroke-width="1"/>
<circle cx="341.5" cy="314.0" r="10.8" fill="#1c2334" stroke="#e6e6e6" stroke-width="5.6"/>
<path d="M352.3 313.0C352.5 322.0 353.5 328.0 354.5 336.0" fill="none" stroke="#dedede" stroke-width="5.4"/>
<circle cx="341.5" cy="314.0" r="10" fill="none" stroke="#3c3c3c" stroke-width=".7"/>
<circle cx="341.5" cy="314.0" r="11.8" fill="none" stroke="#3c3c3c" stroke-width=".7"/>
<path d="M351.0 317.0l2.3 17M353.3 317.0l2 17" fill="none" stroke="#3a3a3a" stroke-width=".6"/>
<circle cx="343.0" cy="314.5" r="5" fill="#868686"/>
<path d="M347.3 317.0L344.5 319.8" stroke="#f4f4f4" stroke-width="1.5" stroke-linecap="round"/>
<path d="M338.5 319.8L335.7 317.0" stroke="#f4f4f4" stroke-width="1.5" stroke-linecap="round"/>
<path d="M335.7 311.0L338.5 308.2" stroke="#f4f4f4" stroke-width="1.5" stroke-linecap="round"/>
<path d="M344.5 308.2L347.3 311.0" stroke="#f4f4f4" stroke-width="1.5" stroke-linecap="round"/>
<circle cx="329.5" cy="326.5" r="2.2" fill="#e4e4e4"/>
<rect x="358.5" y="325.5" width="27" height="17" fill="#6c6c6c"/>
<path d="M360.5 330.5l1.2 11" stroke="#161616" stroke-width="1.6"/>
<path d="M364.5 330.5l1.2 13" stroke="#161616" stroke-width="1.6"/>
<path d="M368.5 330.5l1.2 10" stroke="#161616" stroke-width="1.6"/>
<path d="M373.5 330.5l1.2 12" stroke="#161616" stroke-width="1.6"/>
<path d="M377.5 330.5l1.2 13" stroke="#161616" stroke-width="1.6"/>
<path d="M381.5 330.5l1.2 11" stroke="#161616" stroke-width="1.6"/>
<path d="M362.5 333.5l0.6 9" stroke="#d8d8d8" stroke-width="1"/>
<path d="M371.5 333.5l0.6 8" stroke="#d8d8d8" stroke-width="1"/>
<path d="M379.5 333.5l0.6 10" stroke="#d8d8d8" stroke-width="1"/>
<circle cx="371.5" cy="316.5" r="10.8" fill="#1c2334" stroke="#e6e6e6" stroke-width="5.6"/>
<path d="M382.3 315.5C382.5 324.5 383.5 330.5 384.5 338.5" fill="none" stroke="#dedede" stroke-width="5.4"/>
<circle cx="371.5" cy="316.5" r="10" fill="none" stroke="#3c3c3c" stroke-width=".7"/>
<circle cx="371.5" cy="316.5" r="11.8" fill="none" stroke="#3c3c3c" stroke-width=".7"/>
<path d="M381.0 319.5l2.3 17M383.3 319.5l2 17" fill="none" stroke="#3a3a3a" stroke-width=".6"/>
<circle cx="373.0" cy="317.0" r="5" fill="#868686"/>
<path d="M377.3 319.5L374.5 322.3" stroke="#f4f4f4" stroke-width="1.5" stroke-linecap="round"/>
<path d="M368.5 322.3L365.7 319.5" stroke="#f4f4f4" stroke-width="1.5" stroke-linecap="round"/>
<path d="M365.7 313.5L368.5 310.7" stroke="#f4f4f4" stroke-width="1.5" stroke-linecap="round"/>
<path d="M374.5 310.7L377.3 313.5" stroke="#f4f4f4" stroke-width="1.5" stroke-linecap="round"/>
<circle cx="359.5" cy="329.0" r="2.2" fill="#e4e4e4"/>
<rect x="389.0" y="324.0" width="27" height="17" fill="#6c6c6c"/>
<path d="M391.0 329.0l1.2 11" stroke="#161616" stroke-width="1.6"/>
<path d="M395.0 329.0l1.2 13" stroke="#161616" stroke-width="1.6"/>
<path d="M399.0 329.0l1.2 10" stroke="#161616" stroke-width="1.6"/>
<path d="M404.0 329.0l1.2 12" stroke="#161616" stroke-width="1.6"/>
<path d="M408.0 329.0l1.2 13" stroke="#161616" stroke-width="1.6"/>
<path d="M412.0 329.0l1.2 11" stroke="#161616" stroke-width="1.6"/>
<path d="M393.0 332.0l0.6 9" stroke="#d8d8d8" stroke-width="1"/>
<path d="M402.0 332.0l0.6 8" stroke="#d8d8d8" stroke-width="1"/>
<path d="M410.0 332.0l0.6 10" stroke="#d8d8d8" stroke-width="1"/>
<circle cx="402.0" cy="315.0" r="10.8" fill="#1c2334" stroke="#e6e6e6" stroke-width="5.6"/>
<path d="M412.8 314.0C413.0 323.0 414.0 329.0 415.0 337.0" fill="none" stroke="#dedede" stroke-width="5.4"/>
<circle cx="402.0" cy="315.0" r="10" fill="none" stroke="#3c3c3c" stroke-width=".7"/>
<circle cx="402.0" cy="315.0" r="11.8" fill="none" stroke="#3c3c3c" stroke-width=".7"/>
<path d="M411.5 318.0l2.3 17M413.8 318.0l2 17" fill="none" stroke="#3a3a3a" stroke-width=".6"/>
<circle cx="403.5" cy="315.5" r="5" fill="#868686"/>
<path d="M407.8 318.0L405.0 320.8" stroke="#f4f4f4" stroke-width="1.5" stroke-linecap="round"/>
<path d="M399.0 320.8L396.2 318.0" stroke="#f4f4f4" stroke-width="1.5" stroke-linecap="round"/>
<path d="M396.2 312.0L399.0 309.2" stroke="#f4f4f4" stroke-width="1.5" stroke-linecap="round"/>
<path d="M405.0 309.2L407.8 312.0" stroke="#f4f4f4" stroke-width="1.5" stroke-linecap="round"/>
<circle cx="390.0" cy="327.5" r="2.2" fill="#e4e4e4"/>
<rect x="420.0" y="324.5" width="27" height="17" fill="#6c6c6c"/>
<path d="M422.0 329.5l1.2 11" stroke="#161616" stroke-width="1.6"/>
<path d="M426.0 329.5l1.2 13" stroke="#161616" stroke-width="1.6"/>
<path d="M430.0 329.5l1.2 10" stroke="#161616" stroke-width="1.6"/>
<path d="M435.0 329.5l1.2 12" stroke="#161616" stroke-width="1.6"/>
<path d="M439.0 329.5l1.2 13" stroke="#161616" stroke-width="1.6"/>
<path d="M443.0 329.5l1.2 11" stroke="#161616" stroke-width="1.6"/>
<path d="M424.0 332.5l0.6 9" stroke="#d8d8d8" stroke-width="1"/>
<path d="M433.0 332.5l0.6 8" stroke="#d8d8d8" stroke-width="1"/>
<path d="M441.0 332.5l0.6 10" stroke="#d8d8d8" stroke-width="1"/>
<circle cx="433.0" cy="315.5" r="10.8" fill="#1c2334" stroke="#e6e6e6" stroke-width="5.6"/>
<path d="M443.8 314.5C444.0 323.5 445.0 329.5 446.0 337.5" fill="none" stroke="#dedede" stroke-width="5.4"/>
<circle cx="433.0" cy="315.5" r="10" fill="none" stroke="#3c3c3c" stroke-width=".7"/>
<circle cx="433.0" cy="315.5" r="11.8" fill="none" stroke="#3c3c3c" stroke-width=".7"/>
<path d="M442.5 318.5l2.3 17M444.8 318.5l2 17" fill="none" stroke="#3a3a3a" stroke-width=".6"/>
<circle cx="434.5" cy="316.0" r="5" fill="#868686"/>
<path d="M438.8 318.5L436.0 321.3" stroke="#f4f4f4" stroke-width="1.5" stroke-linecap="round"/>
<path d="M430.0 321.3L427.2 318.5" stroke="#f4f4f4" stroke-width="1.5" stroke-linecap="round"/>
<path d="M427.2 312.5L430.0 309.7" stroke="#f4f4f4" stroke-width="1.5" stroke-linecap="round"/>
<path d="M436.0 309.7L438.8 312.5" stroke="#f4f4f4" stroke-width="1.5" stroke-linecap="round"/>
<circle cx="421.0" cy="328.0" r="2.2" fill="#e4e4e4"/>
<rect x="452.0" y="319.5" width="27" height="17" fill="#6c6c6c"/>
<path d="M454.0 324.5l1.2 11" stroke="#161616" stroke-width="1.6"/>
<path d="M458.0 324.5l1.2 13" stroke="#161616" stroke-width="1.6"/>
<path d="M462.0 324.5l1.2 10" stroke="#161616" stroke-width="1.6"/>
<path d="M467.0 324.5l1.2 12" stroke="#161616" stroke-width="1.6"/>
<path d="M471.0 324.5l1.2 13" stroke="#161616" stroke-width="1.6"/>
<path d="M475.0 324.5l1.2 11" stroke="#161616" stroke-width="1.6"/>
<path d="M456.0 327.5l0.6 9" stroke="#d8d8d8" stroke-width="1"/>
<path d="M465.0 327.5l0.6 8" stroke="#d8d8d8" stroke-width="1"/>
<path d="M473.0 327.5l0.6 10" stroke="#d8d8d8" stroke-width="1"/>
<circle cx="465.0" cy="310.5" r="10.8" fill="#1c2334" stroke="#e6e6e6" stroke-width="5.6"/>
<path d="M475.8 309.5C476.0 318.5 477.0 324.5 478.0 332.5" fill="none" stroke="#dedede" stroke-width="5.4"/>
<circle cx="465.0" cy="310.5" r="10" fill="none" stroke="#3c3c3c" stroke-width=".7"/>
<circle cx="465.0" cy="310.5" r="11.8" fill="none" stroke="#3c3c3c" stroke-width=".7"/>
<path d="M474.5 313.5l2.3 17M476.8 313.5l2 17" fill="none" stroke="#3a3a3a" stroke-width=".6"/>
<circle cx="466.5" cy="311.0" r="5" fill="#868686"/>
<path d="M470.8 313.5L468.0 316.3" stroke="#f4f4f4" stroke-width="1.5" stroke-linecap="round"/>
<path d="M462.0 316.3L459.2 313.5" stroke="#f4f4f4" stroke-width="1.5" stroke-linecap="round"/>
<path d="M459.2 307.5L462.0 304.7" stroke="#f4f4f4" stroke-width="1.5" stroke-linecap="round"/>
<path d="M468.0 304.7L470.8 307.5" stroke="#f4f4f4" stroke-width="1.5" stroke-linecap="round"/>
<circle cx="453.0" cy="323.0" r="2.2" fill="#e4e4e4"/>
<rect x="484.5" y="323.0" width="27" height="17" fill="#6c6c6c"/>
<path d="M486.5 328.0l1.2 11" stroke="#161616" stroke-width="1.6"/>
<path d="M490.5 328.0l1.2 13" stroke="#161616" stroke-width="1.6"/>
<path d="M494.5 328.0l1.2 10" stroke="#161616" stroke-width="1.6"/>
<path d="M499.5 328.0l1.2 12" stroke="#161616" stroke-width="1.6"/>
<path d="M503.5 328.0l1.2 13" stroke="#161616" stroke-width="1.6"/>
<path d="M507.5 328.0l1.2 11" stroke="#161616" stroke-width="1.6"/>
<path d="M488.5 331.0l0.6 9" stroke="#d8d8d8" stroke-width="1"/>
<path d="M497.5 331.0l0.6 8" stroke="#d8d8d8" stroke-width="1"/>
<path d="M505.5 331.0l0.6 10" stroke="#d8d8d8" stroke-width="1"/>
<circle cx="497.5" cy="314.0" r="10.8" fill="#1c2334" stroke="#e6e6e6" stroke-width="5.6"/>
<path d="M508.3 313.0C508.5 322.0 509.5 328.0 510.5 336.0" fill="none" stroke="#dedede" stroke-width="5.4"/>
<circle cx="497.5" cy="314.0" r="10" fill="none" stroke="#3c3c3c" stroke-width=".7"/>
<circle cx="497.5" cy="314.0" r="11.8" fill="none" stroke="#3c3c3c" stroke-width=".7"/>
<path d="M507.0 317.0l2.3 17M509.3 317.0l2 17" fill="none" stroke="#3a3a3a" stroke-width=".6"/>
<circle cx="499.0" cy="314.5" r="5" fill="#868686"/>
<path d="M503.3 317.0L500.5 319.8" stroke="#f4f4f4" stroke-width="1.5" stroke-linecap="round"/>
<path d="M494.5 319.8L491.7 317.0" stroke="#f4f4f4" stroke-width="1.5" stroke-linecap="round"/>
<path d="M491.7 311.0L494.5 308.2" stroke="#f4f4f4" stroke-width="1.5" stroke-linecap="round"/>
<path d="M500.5 308.2L503.3 311.0" stroke="#f4f4f4" stroke-width="1.5" stroke-linecap="round"/>
<circle cx="485.5" cy="326.5" r="2.2" fill="#e4e4e4"/>
<!-- tray frame -->
<rect x="303.2" y="190.7" width="222.6" height="165.3" rx="7" fill="none" stroke="#646464" stroke-width="8.4"/>
<rect x="303.2" y="190.7" width="222.6" height="165.3" rx="7" fill="none" stroke="#858585" stroke-width="3.4"/>
<!-- disc + axes -->
<circle cx="510.4" cy="223" r="17.9" fill="#f3f3f3"/>
<circle cx="511" cy="220.4" r="1.3" fill="none" stroke="#aaa" stroke-width=".6"/><circle cx="511.5" cy="225.7" r="1.3" fill="none" stroke="#aaa" stroke-width=".6"/>
<g fill="#1d2436"><circle cx="505" cy="210.5" r="1.1"/><circle cx="519.5" cy="212" r="1.1"/><circle cx="524.5" cy="225.5" r="1.1"/><circle cx="516" cy="236.8" r="1.1"/><circle cx="501.5" cy="234.5" r="1.1"/><circle cx="497" cy="221.5" r="1.1"/></g><path d="M517 213a11.5 11.5 0 0 1 0 20" fill="none" stroke="#c4c4c4" stroke-width=".8"/>
<path d="M494.2 214L481.3 182.5" stroke="#24b32a" stroke-width="1.3"/>
<path d="M480.1 179.3L484.2 184.3L479.8 186.1Z" fill="#2fd636"/>
<path d="M492 223.3L456 237.7" stroke="#e02424" stroke-width="1.4" stroke-dasharray="5 2"/>
<text x="483.3" y="179.5" font-family="Liberation Sans, sans-serif" font-size="6.5" font-weight="bold" fill="#fff">Y</text>
<text x="460.5" y="236" font-family="Liberation Sans, sans-serif" font-size="5" font-weight="bold" fill="#fff">X</text>
<text x="495.5" y="219" font-family="Liberation Sans, sans-serif" font-size="4.5" font-weight="bold" fill="#111" transform="rotate(-60 497 217.5)">Z</text>
<!-- bottom stuff -->
<rect x="357" y="361" width="22.5" height="55" fill="#1a1a1b"/>
<rect x="464.7" y="361" width="22.5" height="59" fill="#1a1a1b"/>
<rect x="424.7" y="362.6" width="6.8" height="35.4" fill="#b9b9b9"/><rect x="433" y="362.6" width="9.2" height="35.4" fill="#cfcfcf"/>
<rect x="424.7" y="405" width="6.8" height="18" fill="#8e8e8e"/><rect x="433" y="405" width="9.2" height="16" fill="#a2a2a2"/>
<rect x="451.2" y="366.3" width="3.3" height="16" fill="#a0a0a0"/><rect x="455.5" y="366.3" width="3.5" height="16" fill="#b5b5b5"/>
<rect x="451.2" y="385" width="3.3" height="12" fill="#777"/><rect x="455.5" y="385" width="3.5" height="12" fill="#888"/>
<rect x="451.2" y="411" width="3" height="9" fill="#888"/><rect x="455.5" y="411" width="3" height="12" fill="#9a9a9a"/>
<rect x="420" y="380" width="5" height="1.5" fill="#999"/>
<rect x="346" y="364" width="3" height="28" fill="#4a4a4a"/><rect x="346" y="405" width="3" height="12" fill="#3c3c3c"/>
<path d="M317 397.2H354" stroke="#8c8c8c" stroke-width="2"/>
<path d="M491.4 404.3H532" stroke="#8a8a8a" stroke-width="2"/>
<path d="M395 402.5H466" stroke="#8d8d8d" stroke-width="1.6"/>
<rect x="318" y="367" width="2.5" height="3" fill="#777"/><rect x="318" y="381" width="2.5" height="3" fill="#777"/><rect x="318" y="408" width="3" height="4" fill="#666"/>
<rect x="498" y="382" width="2" height="2" fill="#666"/><rect x="519" y="369" width="1.5" height="6" fill="#444"/><rect x="504" y="362" width="30" height="1.5" fill="#222"/>
<rect x="533.7" y="362.5" width="18.8" height="61.5" fill="#aaaaaa"/>
<rect x="533.7" y="362.5" width="6" height="61.5" fill="#9c9c9c"/>
<path d="M234 416.5H265" stroke="#3a3a3a" stroke-width="3"/>
<!-- bounding box -->
<g fill="none" stroke="#d0c822" stroke-width="1.3">
<path d="M239.3 119.6L550.8 113.4L551.3 402L239.3 398.4Z"/>
<path d="M302.6 186.5L302.6 159.8L540.6 156.3L540.6 375L531 374.7M530.7 374.7L311 373"/>
<path d="M239.3 119.6L302.6 159.8M550.8 113.4L540.6 156.3M551.3 402L540.6 375M239.3 398.4L293.7 376.7"/>
</g>
<!-- redraw occluders over box lines -->
<rect x="293.7" y="395" width="17" height="18.5" fill="#b4b4b4"/><rect x="293.7" y="395" width="5" height="18.5" fill="#9c9c9c"/>
<rect x="537.8" y="157" width="2" height="24" fill="#a9a9a9"/>
<rect x="424.7" y="362.6" width="6.8" height="30" fill="#b9b9b9"/><rect x="433" y="362.6" width="9.2" height="30" fill="#cfcfcf"/>
<!-- right object -->
<path d="M643 191L662.4 203.2L662.4 232L646 232L646 252.7L643 252.7Z" fill="#0a0a0c"/>
<rect x="634.8" y="211.5" width="7" height="49.5" fill="#777"/>
<rect x="616.2" y="236.2" width="21.5" height="117.4" fill="#8e8e8e"/>
<rect x="616.2" y="236.2" width="6" height="117.4" fill="#a2a2a2"/>
<rect x="633" y="236.2" width="4.7" height="117.4" fill="#6e6e6e"/>
<rect x="616.2" y="295" width="21.5" height="58.6" fill="#000" opacity=".18"/><rect x="616.2" y="325" width="21.5" height="28.6" fill="#000" opacity=".12"/>
<g fill="#1b1b2a"><circle cx="627" cy="245" r="1.5"/><circle cx="626.5" cy="263" r="1.5"/><circle cx="625" cy="325" r="1.5"/><circle cx="624.5" cy="343" r="1.5"/></g>
<path d="M621 295l9 6" stroke="#222" stroke-width="1.6"/>
<circle cx="634" cy="329" r="3" fill="none" stroke="#222" stroke-width="1.2"/>
<rect x="638.9" y="359.8" width="46" height="23.8" fill="#0a0a0c"/>
<path d="M660 363l8 3l-3 6l-6-4Z" fill="#2a2a2c"/>
<path d="M637.7 396.8L648 398L662 408L662.4 423L640 423.6L637.7 418Z" fill="#4c4c4e"/>
<path d="M629 419H662" stroke="#7a7a7a" stroke-width="2.4"/>
<rect x="630" y="386" width="5" height="2.5" fill="#777"/><rect x="672" y="388" width="12" height="2" fill="#444"/>
<path d="M641 324v36" stroke="#333" stroke-width="2"/>
</g>
</svg>
  <!-- header controls -->
  <div style="left:13px;top:4px;width:66.5px;height:19.5px;background:#1b1c21;border-radius:3px"></div>
  <svg style="left:17.5px;top:6.5px" width="14" height="14" viewBox="0 0 14 14"><path d="M1 1h9.5v6.2a4 4 0 0 0-3.6 5.3H1Z" fill="#c9ccd4"/><path d="M2.5 3.5h6.5M2.5 6h6.5M2.5 8.5h4" stroke="#1b1c21" stroke-width="1"/><circle cx="10.3" cy="10.7" r="3.2" fill="#c9ccd4"/><path d="M10.3 8.9v2h1.6" stroke="#1b1c21" stroke-width=".9" fill="none"/></svg>
  <div class="t" style="left:33.5px;top:9.5px;font-size:10px;color:#e0e2ea">历史数据</div>
  <div class="blue" style="left:419.5px;top:3.5px;width:53.5px;height:20px;border-radius:2px"></div>
  <svg style="left:441px;top:7px" width="12" height="13" viewBox="0 0 12 13"><path d="M.8 .5L11.5 6.5L.8 12.5Z" fill="#fff"/></svg>
  <svg style="left:861px;top:5.5px" width="18" height="15" viewBox="0 0 18 15" fill="none" stroke="#c9ccd4" stroke-width="1.5"><path d="M1 1.5h15M1 6.5h8M1 11.5h5"/><circle cx="13" cy="10.5" r="2.3" stroke-width="1.6"/><path d="M13 6.3v1.4M13 13.3v1.4M8.8 10.5h1.4M15.8 10.5h1.4M10 7.5l1 1M15 12.5l1 1M16 7.5l-1 1M11 12.5l-1 1" stroke-width="1.3"/></svg>

  <!-- mode buttons -->
  <div class="blue" style="left:13px;top:40.2px;width:60px;height:19.9px;border-radius:3px"></div>
  <svg style="left:20.5px;top:47.5px" width="7" height="5" viewBox="0 0 7 5" fill="none" stroke="#fff" stroke-width="1.2"><path d="M.7 .8l2.8 2.8l2.8-2.8"/></svg>
  <div class="t" style="left:32.5px;top:45.5px;font-size:10px;color:#fff">3D匹配</div>
  <div style="left:80px;top:40.2px;width:59.5px;height:19.9px;background:#5c5f72;border-radius:3px"></div>
  <div class="t" style="left:93px;top:45.5px;font-size:10px;color:#c9ccd6">2D识别</div>

  <!-- right icon buttons -->
  <div style="left:779.8px;top:40.5px;width:19.6px;height:19.5px;background:#1a1b20;border-radius:3px"></div>
  <svg style="left:782.5px;top:43px" width="14" height="14" viewBox="0 0 14 14" fill="none" stroke="#e6e7ec"><rect x="1.5" y="1.5" width="3" height="3" stroke-width="1"/><rect x="9.5" y="9.5" width="3" height="3" stroke-width="1"/><path d="M4.5 4.5l5 5" stroke-width="1.5"/></svg>
  <div style="left:806.3px;top:40.5px;width:19.6px;height:19.5px;background:#1a1b20;border-radius:3px"></div>
  <svg style="left:808px;top:41px" width="17" height="17" viewBox="0 0 16 16"><path d="M7 1.5L12 4v5.5L7 12L2 9.5V4Z" fill="#dcdde2"/><path d="M2 4l5 2.5L12 4M7 6.5V12" stroke="#55585f" stroke-width=".8" fill="none"/><path d="M7 6.5L12 4v5.5L7 12Z" fill="#b9bac0"/><path d="M2.5 11.5a6 2.5 0 0 0 7 2.3" stroke="#dcdde2" stroke-width="1.1" fill="none"/><path d="M12.5 10v5M10 12.5h5" stroke="#2f86e8" stroke-width="1.5"/></svg>
  <div style="left:827.8px;top:33.3px;width:30.5px;height:33.8px;border:3.5px solid #f3524c;border-radius:6px;background:#1c2230"></div>
  <div style="left:833px;top:40px;width:20px;height:20px;background:#30333f;border-radius:3px"></div>
  <svg style="left:835px;top:42px" width="16" height="17" viewBox="0 0 16 17"><rect x="2.4" y="3.4" width="3" height="10" rx=".8" fill="#4a4e5c" stroke="#a4a8b8" stroke-width=".9"/><rect x="10.5" y="3.4" width="3" height="10" rx=".8" fill="#4a4e5c" stroke="#a4a8b8" stroke-width=".9"/><path d="M5.8 1.5h4.4L8 4.6Z" fill="#1e9af5"/><path d="M5.8 15.2h4.4L8 12.2Z" fill="#1e9af5"/></svg>
  <div style="left:860.2px;top:40.5px;width:19.4px;height:19.5px;background:#1a1b20;border-radius:3px"></div>
  <svg style="left:864.5px;top:45px" width="11" height="11" viewBox="0 0 11 11" stroke="#fff" stroke-width="1.7"><path d="M0 2h10.5M0 5.5h10.5M0 9h10.5"/></svg>

  <!-- gizmo -->
  <svg style="left:805px;top:65px" width="90" height="75" viewBox="812 124 90 75">
    <circle cx="856.6" cy="159.3" r="36" fill="#fff" opacity=".012"/>
    <path d="M856.6 159.3H880.8" stroke="#e04434" stroke-width="1.6"/>
    <path d="M856.6 159.3V183" stroke="#f0be1e" stroke-width="1.6"/>
    <circle cx="856.6" cy="135.7" r="7.6" fill="#e5b219"/>
    <circle cx="832.7" cy="159.3" r="7.6" fill="#a7281d"/>
    <circle cx="856.6" cy="159.3" r="8.8" fill="#78ba56"/>
    <circle cx="880.8" cy="158.7" r="7.4" fill="#e04434"/>
    <circle cx="856.6" cy="183" r="7.6" fill="#f0be1e"/>
    <text x="880.8" y="162.6" text-anchor="middle" font-family="Liberation Sans, sans-serif" font-weight="bold" font-size="10.5" fill="#120808">X</text>
    <text x="856.6" y="186.8" text-anchor="middle" font-family="Liberation Sans, sans-serif" font-weight="bold" font-size="10.5" fill="#120808">Y</text>
  </svg>

  <!-- bottom controls -->
  <div class="blue" style="left:12.8px;top:406px;width:27px;height:13.7px;border-radius:7px"></div>
  <div style="left:27.8px;top:407.6px;width:10.5px;height:10.5px;border-radius:50%;background:#fff"></div>
  <div class="t" style="left:46.5px;top:407.5px;font-size:10px;color:#d8dae0">实时调参显示</div>
  <svg style="left:364.8px;top:405.9px" width="13.4" height="13.4" viewBox="0 0 14 14"><circle cx="7" cy="7" r="6.8" fill="#b3b6c6"/><circle cx="7" cy="3.8" r="1.1" fill="#14151a"/><path d="M5.6 6h2.1v4.3M5.4 10.6h3.4" stroke="#14151a" stroke-width="1.4" fill="none"/></svg>
  <div class="t" style="left:381.2px;top:407.5px;font-size:10px;color:#c9ccd4">鼠标右键可选中单个工件</div>
  <div style="left:709.2px;top:403px;width:170.5px;height:20px;background:#1a1b20;border-radius:3px"></div>
  <div class="t" style="left:715.3px;top:407.5px;font-size:10px;color:#c9ccd4">点大小</div>
  <div style="left:752px;top:410.5px;width:121.2px;height:4px;background:#000;border-radius:2px"></div>
  <div style="left:752px;top:410.5px;width:27px;height:4px;background:#3353ea;border-radius:2px"></div>
  <div style="left:774px;top:407.3px;width:10.4px;height:10.4px;border-radius:50%;background:#fff"></div>
</div>

<!-- LOG PANEL -->
<div id="log" class="abs panel" style="left:7px;top:502px;width:892px;height:145px">
  <div class="phead"></div>
  <div class="t c" style="left:13px;top:9px;font-size:10px;color:#a4a7b2">日志</div>
  <div style="left:0;top:27px;width:883px;height:20px;background:#3b3e4a"></div>
  <div class="t c" style="left:13px;top:32px;font-size:10px;color:#d0d3da">时间</div>
  <div class="t c" style="left:149px;top:32px;font-size:10px;color:#d0d3da">等级</div>
  <div class="t c" style="left:213px;top:32px;font-size:10px;color:#d0d3da">内容</div>

  <div class="t ts" style="left:13px;top:55px;font-size:10.5px">2025-07-23 16:55:42,687</div>
  <div class="t ts" style="left:13px;top:75px;font-size:10.5px">2025-07-23 16:55:42,687</div>
  <div class="t ts" style="left:13px;top:95px;font-size:10.5px">2025-07-23 16:55:42,687</div>
  <div class="bdg ctr" style="left:153.3px;top:53.8px">I</div>
  <div class="bdg ctr" style="left:153.3px;top:73.8px">I</div>
  <div class="bdg ctr" style="left:153.3px;top:93.8px">I</div>
  <div class="t c ts" style="left:203px;top:55.7px">检测到的实例数量: 18</div>
  <div class="t c ts" style="left:203px;top:75.7px">检测管线运行总耗时: 4.282s</div>
  <div class="t c ts" style="left:203px;top:95.7px">客户端触发, 实时调参检测流程耗时: 4.31 s</div>

  <div style="left:884.8px;top:96.5px;width:6.3px;height:11.2px;background:#5a5d70;border-radius:3px"></div>

  <div class="t c" style="left:13px;top:123px;font-size:10px;color:#a4a7b2">等级</div>
  <div class="inp" style="left:40px;top:118px;width:80px;height:20px"></div>
  <div class="t" style="left:46.6px;top:123px;font-size:10px;color:#d8dae0">INFO</div>
  <svg style="left:103px;top:125px" width="11" height="7" viewBox="0 0 11 7" fill="none" stroke="#c9ccd4" stroke-width="1.4"><path d="M1 1l4.5 4.5l4.5-4.5"/></svg>
  <div class="blue ctr" style="left:127px;top:118px;width:60px;height:20px;font-size:10px;color:#fff">清空</div>

  <div class="inp" style="left:588px;top:117px;width:292px;height:22px;border-radius:3px"></div>
  <svg style="left:597px;top:121px" width="15" height="15" viewBox="0 0 15 15" fill="none" stroke="#e6e7ec" stroke-width="1.7"><circle cx="5.7" cy="5.7" r="4"/><path d="M8.7 8.7l5 5" stroke-width="2"/></svg>
  <div class="t c" style="left:631px;top:123px;font-size:10px;color:#1c1d22">搜索日志信息</div>
  <div style="left:824px;top:123px;width:2px;height:10px;background:#34363f"></div>
  <svg style="left:838px;top:125px" width="10" height="7" viewBox="0 0 10 7" fill="none" stroke="#d8dae0" stroke-width="1.5"><path d="M1 6l4-4l4 4"/></svg>
  <svg style="left:858px;top:125px" width="10" height="7" viewBox="0 0 10 7" fill="none" stroke="#b4b7c2" stroke-width="1.5"><path d="M1 1l4 4l4-4"/></svg>
</div>

<!-- RIGHT PANEL -->
<div id="right" class="abs panel" style="left:907px;top:59px;width:366px;height:588px">
  <div class="phead"></div>
  <div class="t c" style="left:12px;top:8.8px;font-size:11.7px;color:#a4a7b2">运行配置</div>
  <!-- tabs -->
  <div style="left:13px;top:40.2px;width:340px;height:19.9px;background:#292b34;border-radius:3px"></div>
  <div class="blue" style="left:296.5px;top:40.2px;width:56.5px;height:19.9px;border-radius:3px"></div>
  <div class="t c tab" style="left:21px;top:46px">作业信息</div>
  <div class="t c tab" style="left:88px;top:46px">工件</div>
  <div class="t c tab" style="left:134px;top:46px">末端工具</div>
  <div class="t c tab" style="left:191px;top:46px">手眼标定</div>
  <div class="t c tab" style="left:259px;top:46px">ROI</div>
  <div class="t c tab" style="left:304px;top:46px;color:#fff">视觉参数</div>
  <div style="left:13px;top:65.6px;width:340px;height:1px;background:#34363f"></div>
  <!-- back -->
  <div style="left:13px;top:67.3px;width:46.8px;height:19.6px;background:#6a6d80;border-radius:3px"></div>
  <svg style="left:21px;top:72px" width="7" height="10" viewBox="0 0 7 10" fill="none" stroke="#a9acbb" stroke-width="1.4"><path d="M5.5 1L1.5 5l4 4"/></svg>
  <div class="t c" style="left:36px;top:72.5px;font-size:10px;color:#e3e5ec">返回</div>

  <!-- card 1 -->
  <div class="card" style="left:13px;top:94px;width:340px;height:116px"></div>
  <svg class="chev" style="left:25px;top:107px" width="10" height="7" viewBox="0 0 10 7" fill="none" stroke="#e8e9ee" stroke-width="1.8"><path d="M1 6l4-4l4 4"/></svg>
  <div class="t c ch" style="left:46px;top:105.3px">视觉处理信息</div>
  <div class="t c lb" style="left:26px;top:142.7px">视觉处理ID</div>
  <div class="t" style="left:115px;top:140.5px;font-size:10px;color:#d8dae0">1</div>
  <div class="t c lb" style="left:26px;top:181.5px">视觉处理名称</div>
  <div class="inp" style="left:115px;top:170px;width:224px;height:27px"></div>
  <div class="t c lb" style="left:123px;top:178.5px">视觉处理参数-1</div>

  <!-- segment -->
  <div class="blue" style="left:13px;top:224px;width:113px;height:20px;border-radius:3px"></div>
  <div style="left:127px;top:224px;width:112px;height:20px;background:#292b34;border-radius:3px"></div>
  <div style="left:240px;top:224px;width:113px;height:20px;background:#292b34;border-radius:3px"></div>
  <div class="ctr c2" style="left:13px;top:224px;width:113px;height:20px;font-size:10px;color:#fff">2D 识别</div>
  <div class="ctr c2" style="left:127px;top:224px;width:112px;height:20px;font-size:10px;color:#5f626e">3D 计算</div>
  <div class="ctr c2" style="left:240px;top:224px;width:113px;height:20px;font-size:10px;color:#5f626e">抓取点处理</div>
  <div class="t c" style="left:13px;top:262.9px;font-size:10px;color:#c4c7d0">2D 识别</div>

  <!-- card 2 -->
  <div class="card" style="left:13px;top:291px;width:340px;height:73px"></div>
  <svg class="chev" style="left:25px;top:304px" width="10" height="7" viewBox="0 0 10 7" fill="none" stroke="#e8e9ee" stroke-width="1.8"><path d="M1 6l4-4l4 4"/></svg>
  <div class="t c ch" style="left:46px;top:302.3px">预处理</div>
  <div class="inp" style="left:27px;top:331px;width:232px;height:25px"></div>
  <div class="t c lb" style="left:33px;top:339.7px">双边滤波</div>
  <svg style="left:242px;top:340px" width="11" height="8" viewBox="0 0 11 8" fill="none" stroke="#c9ccd4" stroke-width="1.5"><path d="M1 1.5l4.5 4.5l4.5-4.5"/></svg>
  <div class="blue ctr c2" style="left:273px;top:334px;width:67px;height:20px;font-size:10px;color:#fff">新增</div>

  <!-- card 3 -->
  <div class="card" style="left:13px;top:377px;width:340px;height:170px;overflow:hidden"></div>
  <svg class="chev" style="left:25px;top:391px" width="10" height="7" viewBox="0 0 10 7" fill="none" stroke="#e8e9ee" stroke-width="1.8"><path d="M1 6l4-4l4 4"/></svg>
  <div class="t c ch" style="left:46px;top:388.8px">实例分割</div>
  <div class="t c lb" style="left:26px;top:426.5px">缩放比例</div>
  <div class="inp" style="left:190px;top:418px;width:149px;height:25px"></div>
  <div class="t" style="left:198px;top:426.9px;font-size:10px;color:#d8dae0">1.00</div>
  <svg style="left:324px;top:421px" width="10" height="19" viewBox="0 0 10 19" fill="none" stroke="#a8abb8" stroke-width="1.2"><path d="M1.3 7.3l3.7-3.7l3.7 3.7M1.3 11.7l3.7 3.7l3.7-3.7"/></svg>
  <div class="t c lb" style="left:26px;top:459.5px">置信度下限阈值</div>
  <div class="inp" style="left:190px;top:451px;width:149px;height:25px"></div>
  <div class="t" style="left:198px;top:459.9px;font-size:10px;color:#d8dae0">0.10</div>
  <svg style="left:324px;top:454px" width="10" height="19" viewBox="0 0 10 19" fill="none" stroke="#a8abb8" stroke-width="1.2"><path d="M1.3 7.3l3.7-3.7l3.7 3.7M1.3 11.7l3.7 3.7l3.7-3.7"/></svg>
  <div class="blue" style="left:26px;top:484px;width:15px;height:15px;border-radius:2px"></div>
  <svg style="left:29px;top:487px" width="9" height="9" viewBox="0 0 9 9" fill="none" stroke="#fff" stroke-width="1.5"><path d="M1 4.5l2.5 2.5l4.5-5.5"/></svg>
  <div class="t c lb" style="left:46px;top:487.2px">【废弃】返回掩膜</div>
  <div style="left:26px;top:505px;width:15px;height:15px;border-radius:2px;background:#343744;border:1px solid #0c0d10"></div>
  <div class="t c lb" style="left:48px;top:508.3px">启用自动增强</div>
  <div style="left:26px;top:530px;width:314px;height:1px;background:#3a3d48"></div>
  <div style="left:13px;top:536px;width:340px;height:11px;overflow:hidden"><div class="t c" style="position:absolute;left:13px;top:2px;font-size:11.7px;color:#8a8d98">点云生成</div></div>

  <div class="blue ctr c2" style="left:280px;top:554px;width:73px;height:26px;font-size:10px;color:#fff;border-radius:2px">应用</div>
</div>

<!-- STATUS -->
<div id="status" class="abs">
  <div class="t" style="left:7px;top:10.2px;font-size:10px;color:#9a9da8">机器人:</div>
  <div class="t" style="left:50px;top:10.2px;font-size:10px;color:#e0433f">未连接</div>
  <div class="t" style="left:127px;top:10.2px;font-size:10px;color:#9a9da8">相机:</div>
  <div class="t" style="left:160px;top:10.2px;font-size:10px;color:#38b556">已连接</div>
</div>

</div>
</body>
</html>
